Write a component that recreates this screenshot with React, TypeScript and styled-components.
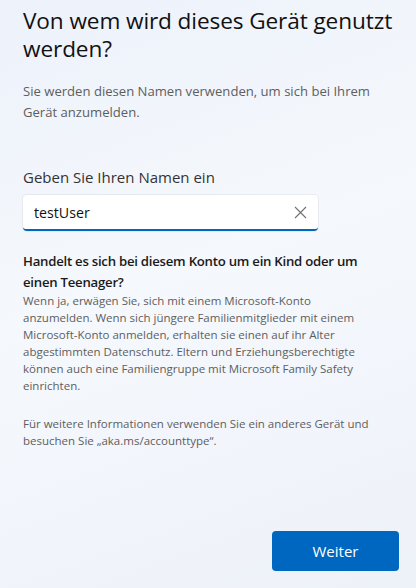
import React from "react";
import styled, { createGlobalStyle } from "styled-components";

const Global = createGlobalStyle`
  html, body { margin: 0; padding: 0; }
  body {
    width: 416px;
    height: 588px;
    overflow: hidden;
    font-family: "Open Sans", "Noto Sans", "Liberation Sans", sans-serif;
    background: linear-gradient(160deg, #edf2fb 0%, #f5f8fc 45%, #f2f5fb 70%, #edf1f8 100%);
    color: #1a1a1a;
  }
`;

const Page = styled.div`
  box-sizing: border-box;
  height: 588px;
  display: flex;
  flex-direction: column;
  padding: 7px 17px 17px 23px;
`;

const Title = styled.h1`
  margin: 0;
  font-size: 22.6px;
  line-height: 28px;
  font-weight: 400;
  color: #111;
  letter-spacing: -0.1px;
`;

const Subtitle = styled.p`
  margin: 18px 0 0;
  font-size: 13.1px;
  line-height: 21px;
  color: #5e5e5e;
  max-width: 370px;
`;

const Label = styled.label`
  display: block;
  margin-top: 44px;
  font-size: 15px;
  line-height: 20px;
  color: #333;
`;

const Field = styled.div`
  margin-top: 8px;
  width: 295px;
  height: 36px;
  box-sizing: border-box;
  background: #fff;
  border-radius: 4px;
  border-bottom: 2px solid #0067c0;
  display: flex;
  align-items: center;
  padding: 0 10px 0 11px;
  box-shadow: 0 0 0 1px rgba(0, 0, 0, 0.05);
`;

const Input = styled.input`
  flex: 1;
  border: 0;
  outline: none;
  background: transparent;
  font-family: inherit;
  font-size: 14.2px;
  color: #111;
  padding: 0;
  caret-color: #111;
`;

const ClearButton = styled.span`
  display: flex;
  align-items: center;
  justify-content: center;
  width: 16px;
  height: 16px;
`;

const Heading = styled.h2`
  margin: 20px 0 0;
  font-size: 13.2px;
  line-height: 20.5px;
  font-weight: 600;
  color: #1a1a1a;
  letter-spacing: -0.25px;
  max-width: 370px;
`;

const Body = styled.p`
  margin: 0;
  font-size: 11.5px;
  line-height: 17px;
  color: #5e5e5e;
  max-width: 360px;
`;

const Note = styled(Body)`
  margin-top: 21px;
`;

const Footer = styled.div`
  margin-top: auto;
  display: flex;
  justify-content: flex-end;
`;

const PrimaryButton = styled.button`
  width: 127px;
  height: 40px;
  border: 0;
  border-radius: 4px;
  background: #0067c0;
  color: #fff;
  font-family: inherit;
  font-size: 15px;
  cursor: pointer;
`;

export default function App() {
  return (
    <>
      <Global />
      <Page>
        <Title>Von wem wird dieses Gerät genutzt werden?</Title>
        <Subtitle>
          Sie werden diesen Namen verwenden, um sich bei Ihrem Gerät anzumelden.
        </Subtitle>
        <Label htmlFor="name">Geben Sie Ihren Namen ein</Label>
        <Field>
          <Input id="name" defaultValue="testUser" />
          <ClearButton>
            <svg width="13" height="13" viewBox="0 0 13 13">
              <path d="M1 1 L12 12 M12 1 L1 12" stroke="#707070" strokeWidth="1.1" fill="none" />
            </svg>
          </ClearButton>
        </Field>
        <Heading>Handelt es sich bei diesem Konto um ein Kind oder um einen Teenager?</Heading>
        <Body>
          Wenn ja, erwägen Sie, sich mit einem Microsoft-Konto anzumelden. Wenn sich jüngere
          Familienmitglieder mit einem Microsoft-Konto anmelden, erhalten sie einen auf ihr Alter
          abgestimmten Datenschutz. Eltern und Erziehungsberechtigte können auch eine
          Familiengruppe mit Microsoft Family Safety einrichten.
        </Body>
        <Note>
          Für weitere Informationen verwenden Sie ein anderes Gerät und besuchen Sie
          „aka.ms/accounttype“.
        </Note>
        <Footer>
          <PrimaryButton>Weiter</PrimaryButton>
        </Footer>
      </Page>
    </>
  );
}
